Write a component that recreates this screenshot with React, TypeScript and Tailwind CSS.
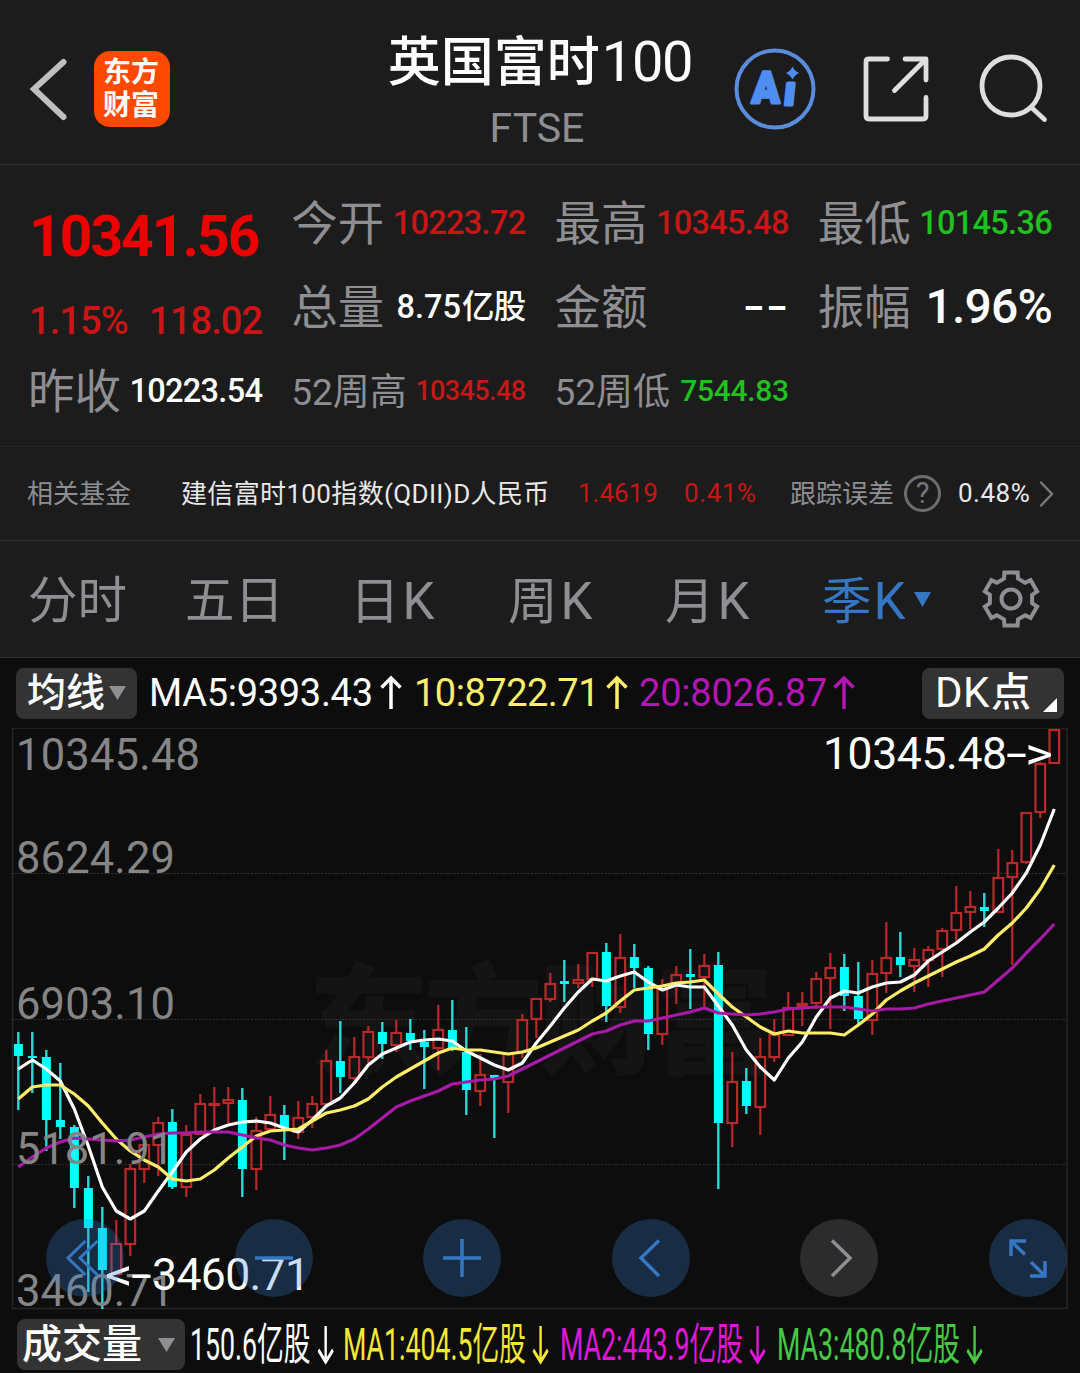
import React from "react";

type Candle = [up: 0 | 1, high: number, top: number, bottom: number, low: number];

const CANDLES: Candle[] = [
  [0, 1032, 1044, 1056, 1110], [0, 1032, 1056, 1058, 1093], [0, 1050, 1057, 1120, 1151],
  [0, 1063, 1120, 1127, 1139], [0, 1125, 1127, 1188, 1208], [0, 1176, 1188, 1228, 1292],
  [0, 1207, 1228, 1270, 1309], [1, 1220, 1243, 1274, 1274], [1, 1164, 1168, 1244, 1256],
  [1, 1144, 1144, 1169, 1183], [1, 1117, 1122, 1145, 1176], [0, 1109, 1122, 1187, 1189],
  [1, 1125, 1134, 1187, 1197], [1, 1094, 1103, 1134, 1134], [1, 1087, 1103, 1105, 1131],
  [1, 1087, 1099, 1103, 1123], [0, 1088, 1100, 1169, 1197], [1, 1117, 1130, 1169, 1190],
  [1, 1096, 1114, 1129, 1129], [0, 1105, 1115, 1128, 1160], [1, 1101, 1117, 1132, 1139],
  [1, 1096, 1103, 1117, 1128], [1, 1050, 1060, 1104, 1104], [0, 1021, 1061, 1077, 1093],
  [1, 1037, 1056, 1078, 1080], [1, 1026, 1031, 1057, 1063], [0, 1022, 1032, 1044, 1059],
  [1, 1020, 1032, 1045, 1052], [0, 1019, 1033, 1041, 1050], [0, 1030, 1042, 1047, 1089],
  [1, 1005, 1029, 1048, 1070], [0, 1000, 1030, 1050, 1051], [0, 1027, 1052, 1090, 1115],
  [1, 1054, 1074, 1091, 1106], [0, 1075, 1075, 1078, 1138], [1, 1053, 1053, 1082, 1113],
  [1, 1014, 1019, 1052, 1058], [1, 998, 998, 1019, 1038], [1, 973, 983, 999, 1002],
  [0, 960, 981, 984, 1002], [1, 964, 979, 983, 988], [1, 952, 952, 979, 987],
  [0, 943, 952, 1006, 1022], [1, 934, 957, 1007, 1013], [0, 944, 957, 968, 988],
  [0, 966, 968, 1034, 1050], [1, 979, 988, 1034, 1045], [1, 966, 974, 983, 1004],
  [0, 949, 974, 977, 1009], [1, 954, 965, 977, 1007], [0, 952, 965, 1123, 1189],
  [1, 1052, 1081, 1123, 1147], [0, 1068, 1081, 1106, 1114], [1, 1038, 1056, 1107, 1135],
  [1, 1019, 1034, 1057, 1062], [1, 992, 1007, 1035, 1035], [1, 992, 1003, 1006, 1026],
  [1, 972, 978, 1003, 1009], [1, 953, 967, 978, 1029], [0, 954, 967, 996, 1011],
  [0, 962, 996, 1019, 1024], [1, 960, 973, 1020, 1035], [1, 922, 957, 973, 993],
  [0, 932, 957, 965, 977], [1, 948, 959, 966, 992], [1, 946, 949, 960, 987],
  [1, 928, 930, 949, 977], [1, 886, 912, 930, 942], [1, 891, 906, 912, 929],
  [0, 893, 907, 911, 927], [1, 849, 877, 912, 912], [1, 850, 862, 877, 965],
  [1, 812, 812, 862, 864], [1, 762, 763, 812, 818], [1, 729, 729, 763, 763],
];

const MA5 = [
  1069, 1060, 1069, 1081, 1109, 1146, 1187, 1211, 1219, 1211, 1191, 1172, 1152, 1139, 1130, 1125,
  1122, 1121, 1123, 1128, 1132, 1120, 1106, 1098, 1083, 1065, 1054, 1048, 1042, 1040, 1039, 1041,
  1051, 1058, 1065, 1070, 1063, 1043, 1026, 1008, 992, 979, 981, 976, 972, 982, 990, 985, 987, 987,
  1006, 1025, 1050, 1067, 1080, 1058, 1042, 1017, 998, 991, 993, 987, 983, 982, 975, 961, 952, 943,
  932, 922, 908, 893, 873, 845, 809,
];

const MA10 = [
  1099, 1087, 1085, 1085, 1094, 1106, 1123, 1139, 1151, 1160, 1167, 1179, 1181, 1179, 1170, 1158,
  1147, 1136, 1131, 1130, 1129, 1121, 1113, 1110, 1106, 1099, 1087, 1077, 1069, 1061, 1053, 1048,
  1050, 1050, 1052, 1054, 1052, 1048, 1042, 1036, 1030, 1021, 1013, 1001, 990, 988, 986, 983, 982,
  980, 994, 1007, 1017, 1027, 1034, 1031, 1033, 1033, 1033, 1035, 1025, 1014, 1000, 991, 983, 976,
  969, 962, 956, 949, 935, 923, 908, 889, 865,
];

const MA20 = [
  1167, 1157, 1148, 1142, 1138, 1139, 1140, 1141, 1140, 1137, 1134, 1133, 1133, 1132, 1132, 1132,
  1135, 1138, 1140, 1145, 1148, 1150, 1148, 1145, 1139, 1129, 1118, 1107, 1101, 1096, 1091, 1084,
  1082, 1080, 1079, 1076, 1069, 1062, 1055, 1048, 1041, 1034, 1031, 1025, 1021, 1021, 1018, 1015,
  1012, 1008, 1013, 1014, 1015, 1014, 1012, 1009, 1008, 1007, 1007, 1007, 1009, 1011, 1009, 1009,
  1008, 1004, 1001, 998, 995, 992, 980, 968, 953, 939, 924,
];

const xAt = (i: number) => 18 + i * 14;
const toPoints = (ys: number[]) => ys.map((y, i) => `${xAt(i) + 0.3},${y}`).join(" ");

const gearPoints = Array.from({ length: 6 }, (_, k) => {
  const pt = (r: number, deg: number) => {
    const a = ((k * 60 - 90 + deg) * Math.PI) / 180;
    return `${(30 + r * Math.cos(a)).toFixed(2)},${(30 + r * Math.sin(a)).toFixed(2)}`;
  };
  return [pt(21.5, -19), pt(27.2, -14), pt(27.2, 14), pt(21.5, 19)].join(" ");
}).join(" ");

function Header() {
  return (
    <header className="relative flex h-[165px] items-start border-b border-[#333333]">
      <svg className="ml-7 mt-[57px] h-16 w-10" viewBox="0 0 40 64" fill="none">
        <path d="M35.500 5 L6 32 L35.500 60" stroke="#bfbfbf" strokeWidth="6" strokeLinecap="round" />
      </svg>
      <div className="ml-[26px] mt-[51px] flex h-[76px] w-[76px] flex-col items-center justify-center rounded-[16px] bg-[#ff4800] pr-[2px] text-[28px] font-bold leading-[33px] text-white">
        <span>东方</span>
        <span>财富</span>
      </div>
      <div className="absolute left-0 right-0 top-[30px] flex flex-col items-center">
        <h1 className="flex items-baseline text-[53px] font-medium leading-[64px] text-white">
          英国富时<span className="ml-[2px] text-[56px] font-normal tracking-[-1.300px]">100</span>
        </h1>
        <p className="mr-[6px] mt-[13px] text-[41px] leading-none text-[#8e8e93]">FTSE</p>
      </div>
      <div className="ml-auto flex items-start">
        <svg className="mt-[47px] h-[84px] w-[84px]" viewBox="733 47 84 84">
          <clipPath id="stem"><rect x="775" y="81.500" width="40" height="30" /></clipPath>
          <circle cx="775" cy="89" r="38.500" fill="none" stroke="#5a8cdc" strokeWidth="4" />
          <g fill="#4f8df0" stroke="#4f8df0" strokeWidth="3" strokeLinejoin="round" className="font-black">
            <text transform="translate(751.500 102.500) skewX(-2)" fontSize="44" textLength="28" lengthAdjust="spacingAndGlyphs">A</text>
            <g clipPath="url(#stem)">
              <text transform="translate(783 104.500) skewX(-6)" fontSize="41">i</text>
            </g>
          </g>
          <path d="M792.500 66.500 Q794.500 71 799 73 Q794.500 75 792.500 79.500 Q790.500 75 786 73 Q790.500 71 792.500 66.500Z" fill="#4f8df0" />
        </svg>
        <svg className="ml-[43px] mt-[53px] h-[72px] w-[72px]" viewBox="860 53 72 72" fill="none" stroke="#dedede" strokeWidth="4.800" strokeLinecap="round" strokeLinejoin="round">
          <path d="M887.500 59 H869 Q866 59 866 62 V116 Q866 119 869 119 H923 Q926 119 926 116 V97.500" />
          <path d="M905 59 H926 V80 M894.500 90.500 L925 60" />
        </svg>
        <svg className="ml-[45px] mr-[31px] mt-[53px] h-[72px] w-[72px]" viewBox="977 53 72 72" fill="none" stroke="#dedede" strokeWidth="4.800" strokeLinecap="round">
          <circle cx="1011" cy="86" r="29" />
          <path d="M1031.500 107.500 L1044.500 119.500" />
        </svg>
      </div>
    </header>
  );
}

function Cell({ label, children, small }: { label: string; children: React.ReactNode; small?: boolean }) {
  return (
    <div className="flex items-center justify-between">
      <span className={`-ml-px mt-[4px] whitespace-nowrap leading-none text-[#8e8e93] ${small ? "text-[37px]" : "text-[46.500px]"}`}>
        {label}
      </span>
      {children}
    </div>
  );
}

function Stats() {
  const val = "text-[32.500px] font-medium leading-none tracking-[-0.700px] whitespace-nowrap mt-[2px]";
  return (
    <section className="grid h-[282px] grid-cols-4 grid-rows-[84px_84px_84px] gap-x-[30px] border-b border-[#262626] pb-[14px] pl-[29px] pr-[28px] pt-[15px]">
      <div className="flex items-center pt-[28px] text-[57px] font-bold leading-none tracking-[-2px] text-[#ee0000]">10341.56</div>
      <Cell label="今开"><span className={`${val} text-[#c81616]`}>10223.72</span></Cell>
      <Cell label="最高"><span className={`${val} text-[#c81616]`}>10345.48</span></Cell>
      <Cell label="最低"><span className={`${val} text-[#20c020]`}>10145.36</span></Cell>

      <div className="flex items-center justify-between pt-[29px] text-[38px] font-medium leading-none tracking-[-0.900px] text-[#cc1414]">
        <span>1.15%</span>
        <span>118.02</span>
      </div>
      <Cell label="总量"><span className={`${val} text-white`}><span className="mr-px tracking-normal">8.75</span>亿股</span></Cell>
      <Cell label="金额">
        <span className="flex origin-right scale-x-[1.140] font-['Inter'] text-[44px] font-medium leading-none text-white">--</span>
      </Cell>
      <Cell label="振幅"><span className="mt-[2px] text-[48px] font-medium leading-none tracking-[-0.800px] text-white">1.96%</span></Cell>

      <Cell label="昨收"><span className={`${val} text-white`}>10223.54</span></Cell>
      <Cell label="52周高" small><span className="mt-[2px] text-[27px] font-medium leading-none tracking-[-0.600px] text-[#c81616]">10345.48</span></Cell>
      <Cell label="52周低" small><span className="mt-px text-[30px] font-medium leading-none tracking-[-0.300px] text-[#20c020]">7544.83</span></Cell>
    </section>
  );
}

function FundRow() {
  return (
    <section className="flex h-[94px] items-center whitespace-nowrap border-b border-[#333333] pl-[27px] text-[26px] leading-none">
      <span className="w-[154px] text-[#8e8e93]">相关基金</span>
      <span className="w-[397px] tracking-[0.350px] text-[#e8e8e8]">建信富时100指数(QDII)D人民币</span>
      <span className="-mt-[2px] w-[106px] text-[#c81616]">1.4619</span>
      <span className="-mt-[2px] w-[106px] tracking-[0.600px] text-[#c81616]">0.41%</span>
      <span className="w-[114px] text-[#8e8e93]">跟踪误差</span>
      <span className="flex h-[37px] w-[37px] items-center justify-center rounded-full border-[3px] border-[#6c6c70] text-[29px] text-[#77777b]">?</span>
      <span className="-mt-[2px] ml-[17px] w-[81px] tracking-[0.500px] text-[#e8e8e8]">0.48%</span>
      <svg className="h-7 w-4" viewBox="0 0 16 28" fill="none">
        <path d="M2 2.500 L13 14 L2 25.500" stroke="#77777b" strokeWidth="2.500" strokeLinecap="round" />
      </svg>
    </section>
  );
}

function Tabs() {
  const k = "ml-[3px] text-[51px]";
  return (
    <nav className="flex h-[117px] items-center border-b border-[#333333] pl-[28px] text-[49.500px] leading-none text-[#8e8e93]">
      <span className="mt-[6px] w-[157px]">分时</span>
      <span className="mt-[6px] w-[165px]">五日</span>
      <span className="mt-[6px] w-[158px]">日<span className={k}>K</span></span>
      <span className="mt-[6px] w-[157px]">周<span className={k}>K</span></span>
      <span className="mt-[6px] w-[157px]">月<span className={k}>K</span></span>
      <span className="flex w-[159px] items-center text-[#3577c2]">
        <span className="mt-[6px]">季<span className="ml-[2px] text-[51px]">K</span></span>
        <svg className="ml-[8px] h-[15px] w-[17px]" viewBox="0 0 17 15"><path d="M0 0H17L8.500 15Z" fill="#3577c2" /></svg>
      </span>
      <svg className="h-[60px] w-[60px]" viewBox="0 0 60 60" fill="none" stroke="#8e8e93" strokeWidth="4" strokeLinejoin="miter">
        <polygon points={gearPoints} />
        <circle cx="30" cy="30" r="9.500" />
      </svg>
    </nav>
  );
}

function UpArrow() {
  return (
    <svg className="ml-[8px] h-9 w-[22px] shrink-0" viewBox="0 0 22 36" fill="none" stroke="currentColor" strokeWidth="3.500">
      <path d="M11 34 V3 M1.500 12.500 L11 3 L20.500 12.500" />
    </svg>
  );
}

function MaLegend() {
  return (
    <div className="flex h-[70px] items-center whitespace-nowrap pl-4 pr-4 text-[38px] leading-none">
      <div className="flex h-[51px] w-[121px] items-center rounded-[8px] bg-[#333333] pl-[11px] text-[39px] font-medium text-white">
        均线
        <svg className="ml-1 h-[14px] w-[17px]" viewBox="0 0 17 14"><path d="M0 0H17L8.500 14Z" fill="#8e8e93" /></svg>
      </div>
      <span className="ml-[12px] flex w-[265px] items-center text-white"><span className="w-[223px] tracking-[-0.300px]">MA5:9393.43</span><UpArrow /></span>
      <span className="flex w-[225px] items-center text-[#ffee6a]"><span className="w-[184px] tracking-[-0.500px]">10:8722.71</span><UpArrow /></span>
      <span className="flex items-center text-[#b416b4]"><span className="w-[186px] tracking-[-0.200px]">20:8026.87</span><UpArrow /></span>
      <div className="relative ml-auto flex h-[51px] w-[142px] items-center rounded-[8px] bg-[#333333] pl-[13px] text-[40px] text-white">
        <span className="text-[42px] tracking-[0.500px]">DK</span><span className="ml-px font-medium">点</span>
        <svg className="absolute bottom-[7px] right-[7px] h-[14px] w-[14px]" viewBox="0 0 14 14"><path d="M14 0V14H0Z" fill="#fff" /></svg>
      </div>
    </div>
  );
}

const AXIS: [string, number, number][] = [
  ["10345.48", 770, 184],
  ["8624.29", 873, 159],
  ["6903.10", 1019, 159],
  ["5181.91", 1164, 158],
  ["3460.71", 1306, 158],
];

function RoundButton({ muted, children }: { muted?: boolean; children: React.ReactNode }) {
  return (
    <button className={`flex h-[78px] w-[78px] items-center justify-center rounded-full ${muted ? "bg-[#838383]/27 text-[#8e8e93]" : "bg-[#3980d9]/27 text-[#3577c2]"}`}>
      <svg className="h-[50px] w-[50px]" viewBox="-25 -25 50 50" fill="none" stroke="currentColor" strokeWidth="3.500">
        {children}
      </svg>
    </button>
  );
}

function Chart() {
  return (
    <div className="relative h-[586px]">
      <svg className="block h-[586px] w-[1080px]" viewBox="0 728 1080 586">
        <text x="308" y="1065" fontSize="120" className="font-black" fill="#141414" textLength="466">东方财富</text>
        <rect x="12.500" y="728" width="1054.500" height="580.500" fill="none" stroke="#262626" strokeWidth="1.500" />
        {[873.5, 1019.5, 1164.5].map((y) => (
          <line key={y} x1="13" x2="1067" y1={y} y2={y} stroke="#333333" strokeWidth="1" strokeDasharray="2 1.500" />
        ))}
        {CANDLES.map(([up, high, top, bottom, low], i) => {
          const x = xAt(i) + 0.3;
          return up ? (
            <g key={i} stroke="#b82a2a" strokeWidth="2.200">
              <path d={`M${x} ${high}V${top}M${x} ${bottom}V${low}`} />
              <rect x={x - 4.8} y={top + 1} width="9.600" height={Math.max(bottom - top - 1, 1)} fill="none" />
            </g>
          ) : (
            <g key={i}>
              <path d={`M${x} ${high}V${low}`} stroke="#30d5d5" strokeWidth="2.400" />
              <rect x={x - 4.4} y={top} width="9" height={bottom - top} fill="#00ffff" />
            </g>
          );
        })}
        <g fill="none" strokeWidth="3.200" strokeLinejoin="round">
          <polyline points={toPoints(MA5)} stroke="#ffffff" />
          <polyline points={toPoints(MA10)} stroke="#ffee6a" />
          <polyline points={toPoints(MA20)} stroke="#a61aa6" />
        </g>
        <g fontSize="43.500" fill="#858585">
          {AXIS.map(([t, y, w]) => (
            <text key={t} x="16" y={y} textLength={w}>{t}</text>
          ))}
        </g>
        <g fontSize="44.500" fill="#ffffff">
          <text x="823" y="769" textLength="184">10345.48</text>
          <text x="1006" y="769" textLength="21" lengthAdjust="spacingAndGlyphs">-</text>
          <text x="1025" y="769" textLength="28" lengthAdjust="spacingAndGlyphs">&gt;</text>
          <text x="105" y="1290" textLength="28" lengthAdjust="spacingAndGlyphs">&lt;</text>
          <text x="131" y="1290" textLength="21" lengthAdjust="spacingAndGlyphs">-</text>
          <text x="152" y="1290" textLength="158">3460.71</text>
        </g>
      </svg>
      <div className="absolute left-[46px] top-[491px] flex w-[1021px] justify-between">
        <RoundButton><path d="M0.500 -17 L-17 0 L0.500 17 M12.500 -17 L-5 0 L12.500 17" strokeWidth="3" /></RoundButton>
        <RoundButton><path d="M-19 0 H19" /></RoundButton>
        <RoundButton><path d="M-19 0 H19 M0 -19 V19" /></RoundButton>
        <RoundButton><path d="M8 -17.500 L-10 0 L8 18" /></RoundButton>
        <RoundButton muted><path d="M-7 -17.500 L11 0 L-7 18" /></RoundButton>
        <RoundButton><path d="M-2 -17 H-17 V-2 M-17 -17 L-3 -3.500 M17 3 V18 H2 M17 18 L3 4" /></RoundButton>
      </div>
    </div>
  );
}

function VolumeItem({ text, className }: { text: string; className: string }) {
  return (
    <span className={`block h-[45px] ${className}`}>
      <span className="flex w-max origin-left scale-x-[0.607] items-center text-[44px] leading-none">
        {text}
        <svg className="ml-[11px] h-10 w-[27px] shrink-0" viewBox="0 0 27 40" fill="none" stroke="currentColor" strokeWidth="4">
          <path d="M13.500 1 V37 M1.500 25 L13.500 37 L25.500 25" />
        </svg>
      </span>
    </span>
  );
}

function VolumeLegend() {
  return (
    <div className="flex h-[59px] items-start whitespace-nowrap pl-[17px] pt-[5px]">
      <div className="flex h-[51px] w-[168px] items-center rounded-[8px] bg-[#333333] pl-[5px] pt-px text-[40px] font-medium leading-none text-white">
        成交量
        <svg className="ml-[16px] h-[14px] w-[17px]" viewBox="0 0 17 14"><path d="M0 0H17L8.500 14Z" fill="#8e8e93" /></svg>
      </div>
      <div className="ml-[5px] mt-1 flex">
        <VolumeItem text="150.6亿股" className="w-[153px] text-white" />
        <VolumeItem text="MA1:404.5亿股" className="w-[217px] text-[#f5e735]" />
        <VolumeItem text="MA2:443.9亿股" className="w-[217px] text-[#e016d8]" />
        <VolumeItem text="MA3:480.8亿股" className="w-[217px] text-[#46c846]" />
      </div>
    </div>
  );
}

export default function App() {
  return (
    <main className="h-[1373px] w-[1080px] overflow-hidden bg-[#1c1c1c] font-['Roboto','Noto_Sans_CJK_SC',sans-serif]">
      <Header />
      <Stats />
      <FundRow />
      <Tabs />
      <section className="h-[715px] bg-[#0d0d0d]">
        <MaLegend />
        <Chart />
        <VolumeLegend />
      </section>
    </main>
  );
}
